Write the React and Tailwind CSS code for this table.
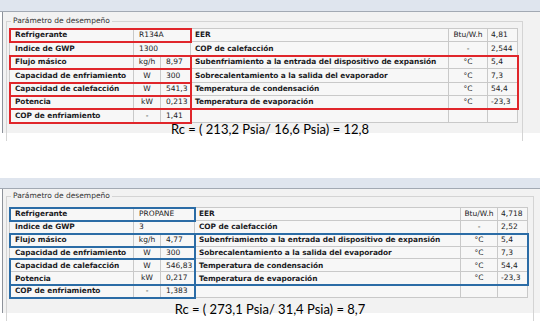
import React from "react";

const topRows = [
  { l: "Refrigerante", m: "R134A", r: "EER", ru: "Btu/W.h", rv: "4,81" },
  { l: "Indice de GWP", m: "1300", r: "COP de calefacción", ru: "-", rv: "2,544" },
  { l: "Flujo másico", u: "kg/h", v: "8,97", r: "Subenfriamiento a la entrada del dispositivo de expansión", ru: "°C", rv: "5,4" },
  { l: "Capacidad de enfriamiento", u: "W", v: "300", r: "Sobrecalentamiento a la salida del evaporador", ru: "°C", rv: "7,3" },
  { l: "Capacidad de calefacción", u: "W", v: "541,3", r: "Temperatura de condensación", ru: "°C", rv: "54,4" },
  { l: "Potencia", u: "kW", v: "0,213", r: "Temperatura de evaporación", ru: "°C", rv: "-23,3" },
  { l: "COP de enfriamiento", u: "-", v: "1,41", r: "", ru: "", rv: "" },
];

const botRows = [
  { l: "Refrigerante", m: "PROPANE", r: "EER", ru: "Btu/W.h", rv: "4,718" },
  { l: "Indice de GWP", m: "3", r: "COP de calefacción", ru: "-", rv: "2,52" },
  { l: "Flujo másico", u: "kg/h", v: "4,77", r: "Subenfriamiento a la entrada del dispositivo de expansión", ru: "°C", rv: "5,4" },
  { l: "Capacidad de enfriamiento", u: "W", v: "300", r: "Sobrecalentamiento a la salida del evaporador", ru: "°C", rv: "7,3" },
  { l: "Capacidad de calefacción", u: "W", v: "546,83", r: "Temperatura de condensación", ru: "°C", rv: "54,4" },
  { l: "Potencia", u: "kW", v: "0,217", r: "Temperatura de evaporación", ru: "°C", rv: "-23,3" },
  { l: "COP de enfriamiento", u: "-", v: "1,383", r: "", ru: "", rv: "" },
];

const cell =
  "border-r border-b border-[#c9c9c9] bg-[#f7f7f7] flex items-center whitespace-nowrap overflow-hidden leading-none";
const bold = " font-bold text-[7.4px] tracking-[-0.05px]";
const reg = " text-[7.5px]";

function Cells({ rows }) {
  return rows.map((row, i) => (
    <React.Fragment key={i}>
      <div className={cell + " pl-[5px]" + bold}>{row.l}</div>
      {row.m !== undefined ? (
        <div className={cell + " col-span-2 pl-[5px]" + reg}>{row.m}</div>
      ) : (
        <>
          <div className={cell + " justify-center" + reg}>{row.u}</div>
          <div className={cell + " pl-[5px]" + reg}>{row.v}</div>
        </>
      )}
      <div className={cell + " pl-[4px]" + bold}>{row.r}</div>
      <div className={cell + " justify-center" + reg}>{row.ru}</div>
      <div className={cell + " pl-[3px]" + reg}>{row.rv}</div>
    </React.Fragment>
  ));
}

function Legend() {
  return (
    <div className="absolute left-[4px] -top-[6px] bg-[#f2f2f2] px-[2px] text-[7.5px] leading-[10px] text-[#333]">
      Parámetro de desempeño
    </div>
  );
}

export default function App() {
  return (
    <div
      className="w-[540px] h-[324px] bg-white overflow-hidden text-[#1b1b24]"
      style={{ fontFamily: '"DejaVu Sans", sans-serif' }}
    >
      {/* Window 1 */}
      <div>
        <div className="h-[12px] bg-[#dfe5ee] border-b border-[#a2a9b3]" />
        <div className="ml-[2px] h-[121px] bg-[#f2f2f2] border-l border-[#8d929a]">
          <div className="relative ml-[3px] pt-[9px]">
            <div className="relative w-[517px] h-[120px] border-t border-l border-r border-[#d4d4d4]">
              <Legend />
              <div className="relative ml-[2px] mt-[6px] w-max border-t border-l border-[#c9c9c9]">
                <div className="grid grid-cols-[124px_27px_30px_258px_39px_30px] grid-rows-[repeat(7,13.4px)]">
                  <Cells rows={topRows} />
                </div>
                <div className="absolute top-0 left-0 grid grid-cols-[124px_27px_30px_258px_39px_30px] grid-rows-[repeat(7,13.4px)] pointer-events-none">
                  <div className="col-start-1 col-end-4 row-start-1 row-end-2 -m-px border-2 border-[#e0262b]" />
                  <div className="col-start-1 col-end-4 row-start-3 row-end-4 -m-px border-2 border-[#e0262b]" />
                  <div className="col-start-1 col-end-4 row-start-5 row-end-6 -m-px border-2 border-[#e0262b]" />
                  <div className="col-start-1 col-end-4 row-start-6 row-end-7 -m-px border-2 border-[#e0262b]" />
                  <div className="col-start-1 col-end-4 row-start-7 row-end-8 -m-px border-2 border-[#e0262b]" />
                  <div className="col-start-4 col-end-7 row-start-3 row-end-7 -m-px border-2 border-[#e0262b]" />
                </div>
              </div>
            </div>
          </div>
        </div>
      </div>
      <div
        className="relative -mt-[11px] h-[14px] text-center text-[13px] leading-[14px] text-black"
        style={{ fontFamily: "Lato, sans-serif" }}
      >
        Rc = ( 213,2 Psia/ 16,6 Psia) = 12,8
      </div>

      {/* Window 2 */}
      <div className="mt-[42px]">
        <div className="h-[11px] bg-[#dfe5ee] border-b border-[#a2a9b3]" />
        <div className="ml-[2px] h-[124px] bg-[#f2f2f2] border-l border-[#8d929a]">
          <div className="relative ml-[3px] pt-[7px]">
            <div className="relative w-[528px] h-[125px] border-t border-l border-r border-[#d4d4d4]">
              <Legend />
              <div className="relative ml-[2px] mt-[10px] w-max border-t border-l border-[#c9c9c9]">
                <div className="grid grid-cols-[124px_27px_34px_266px_37px_30px] grid-rows-[repeat(7,12.86px)]">
                  <Cells rows={botRows} />
                </div>
                <div className="absolute top-0 left-0 grid grid-cols-[124px_27px_34px_266px_37px_30px] grid-rows-[repeat(7,12.86px)] pointer-events-none">
                  <div className="col-start-1 col-end-4 row-start-1 row-end-2 -m-px border-2 border-[#2b6ca6]" />
                  <div className="col-start-1 col-end-4 row-start-3 row-end-4 -m-px border-2 border-[#2b6ca6]" />
                  <div className="col-start-1 col-end-4 row-start-5 row-end-7 -m-px border-2 border-[#2b6ca6]" />
                  <div className="col-start-1 col-end-4 row-start-7 row-end-8 -m-px border-2 border-[#2b6ca6]" />
                  <div className="col-start-4 col-end-7 row-start-3 row-end-7 -m-px border-2 border-[#2b6ca6]" />
                </div>
              </div>
            </div>
          </div>
        </div>
      </div>
      <div
        className="relative -mt-[11px] h-[14px] text-center text-[13px] leading-[14px] text-black"
        style={{ fontFamily: "Lato, sans-serif" }}
      >
        Rc = ( 273,1 Psia/ 31,4 Psia) = 8,7
      </div>
    </div>
  );
}
